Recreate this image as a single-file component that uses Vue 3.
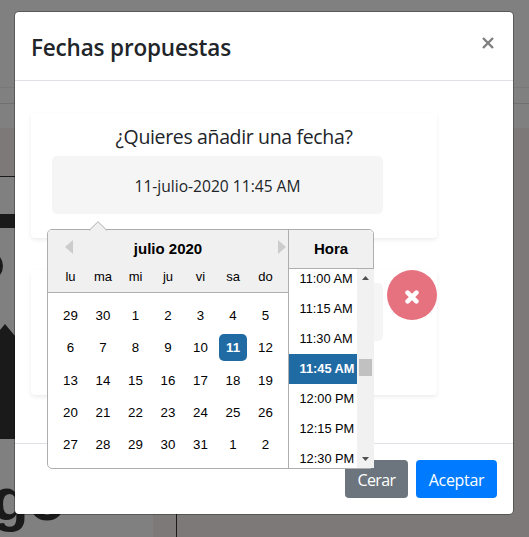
<script setup>
const dayNames = ['lu', 'ma', 'mi', 'ju', 'vi', 'sa', 'do']
const weeks = [
  [29, 30, 1, 2, 3, 4, 5],
  [6, 7, 8, 9, 10, 11, 12],
  [13, 14, 15, 16, 17, 18, 19],
  [20, 21, 22, 23, 24, 25, 26],
  [27, 28, 29, 30, 31, 1, 2],
]
const times = ['11:00 AM', '11:15 AM', '11:30 AM', '11:45 AM', '12:00 PM', '12:15 PM', '12:30 PM']
const selectedTime = '11:45 AM'
</script>

<template>
  <div class="page">
    <svg class="backdrop" width="529" height="537" viewBox="0 0 529 537">
      <rect width="529" height="537" fill="#7d7979" />
      <rect width="529" height="128" fill="#808080" />
      <rect y="87" width="529" height="1" fill="#787878" />
      <rect y="103" width="529" height="1" fill="#707070" />
      <rect y="176" width="177" height="361" fill="#1a1a1a" />
      <rect y="177" width="176" height="360" fill="#7d7979" />
      <rect y="177" width="153" height="360" fill="#808080" />
      <rect y="214" width="60" height="14" fill="#1a1a1a" />
      <circle cx="-12" cy="266" r="15" fill="#1a1a1a" />
      <path d="M0 330L5 324L20 342V439H0Z" fill="#1a1a1a" />
      <text class="brand" x="-8" y="520">go</text>
    </svg>

    <section class="modal">
      <header class="modal-header">
        <h5>Fechas propuestas</h5>
        <button class="close">
          <svg width="12" height="12" viewBox="0 0 12 12"><path d="M1 1L11 11M11 1L1 11" /></svg>
        </button>
      </header>

      <main class="modal-body">
        <div class="card">
          <p class="question">¿Quieres añadir una fecha?</p>
          <div class="field"><span>11-julio-2020 11:45 AM</span></div>
        </div>
        <div class="card saved">
          <div class="field"></div>
          <button class="remove">
            <svg width="14" height="14" viewBox="0 0 14 14"><path d="M2.6 2.7L11.4 11.3M11.4 2.7L2.6 11.3" /></svg>
          </button>
        </div>
      </main>

      <footer class="modal-footer">
        <button class="btn secondary"><span>Cerar</span></button>
        <button class="btn primary"><span>Aceptar</span></button>
      </footer>
    </section>

    <div class="picker">
      <svg class="pointer" width="18" height="10" viewBox="0 0 18 10">
        <path d="M0 9.5L9 .7L18 9.5V10H0Z" fill="#f0f0f0" />
        <path d="M0 9.5L9 .7L18 9.5" fill="none" stroke="#aeaeae" />
      </svg>
      <div class="calendar">
        <div class="calendar-head">
          <div class="month-row">
            <svg width="8" height="14" viewBox="0 0 8 14"><path d="M8 0V14L0 7Z" /></svg>
            <strong>julio 2020</strong>
            <svg width="8" height="14" viewBox="0 0 8 14"><path d="M0 0V14L8 7Z" /></svg>
          </div>
          <div class="names"><span v-for="name in dayNames" :key="name">{{ name }}</span></div>
        </div>
        <div class="weeks">
          <div v-for="(week, i) in weeks" :key="i" class="week">
            <span v-for="day in week" :key="day" :class="{ selected: day === 11 }">{{ day }}</span>
          </div>
        </div>
      </div>
      <div class="time">
        <div class="time-head">Hora</div>
        <div class="time-body">
          <ul>
            <li v-for="time in times" :key="time" :class="{ active: time === selectedTime }">{{ time }}</li>
          </ul>
          <div class="scrollbar">
            <svg width="7" height="4" viewBox="0 0 7 4"><path d="M0 4L3.5 0L7 4Z" /></svg>
            <i></i>
            <svg width="7" height="4" viewBox="0 0 7 4"><path d="M0 0L3.5 4L7 0Z" /></svg>
          </div>
        </div>
      </div>
    </div>
  </div>
</template>

<style>
body { margin: 0; overflow: hidden; }
</style>

<style scoped>
* { box-sizing: border-box; }
.page {
  position: relative;
  width: 529px;
  height: 537px;
  padding: 12px 16px 23px 15px;
  overflow: hidden;
  font-family: "Open Sans", "Noto Sans", sans-serif;
  color: #212529;
}
.backdrop { position: absolute; inset: 0; }
.brand { font: bold 60px "Liberation Sans", sans-serif; fill: #1a1a1a; }
button { border: 0; padding: 0; font-family: inherit; }
svg { display: block; flex: none; }
.modal {
  position: relative;
  display: flex;
  flex-direction: column;
  width: 498px;
  height: 502px;
  background: #fff;
  border-radius: 4px;
  box-shadow: 0 0 0 1px rgba(0, 0, 0, .3);
}
.modal-header {
  display: flex;
  justify-content: space-between;
  height: 69px;
  padding: 21px 19px 0 16px;
  border-bottom: 1px solid #dee2e6;
}
h5 { margin: 0; font-size: 22.5px; line-height: 30px; font-weight: 600; white-space: nowrap; letter-spacing: -.17px; }
.close { height: 12px; margin-top: 4px; background: none; }
.close path { fill: none; stroke: #7f7f7f; stroke-width: 2.4; }
.modal-body { flex: 1; padding: 32px 16px 0; }
.card {
  width: 406px;
  height: 125px;
  padding: 9px 21px 0;
  border-radius: 4px;
  box-shadow: 0 2px 4px rgba(0, 0, 0, .075);
}
.question { margin: 0 0 4px; font-size: 19.5px; line-height: 30px; text-align: center; white-space: nowrap; letter-spacing: -.35px; }
.field {
  display: flex;
  align-items: center;
  justify-content: center;
  width: 331px;
  height: 58px;
  padding-top: 2px;
  border-radius: 5px;
  background: #f5f5f5;
  font-size: 15.6px;
}
.card.saved { display: flex; gap: 4px; margin-top: 32px; padding: 0 0 0 21px; }
.saved .field { margin-top: 13px; }
.remove {
  display: flex;
  align-items: center;
  justify-content: center;
  width: 50px;
  height: 50px;
  padding-top: 3px;
  border-radius: 50%;
  background: #e7727f;
}
.remove path { fill: none; stroke: #fff; stroke-width: 4.6; stroke-linecap: round; }
.modal-footer {
  display: flex;
  justify-content: flex-end;
  gap: 8px;
  height: 71px;
  padding: 16px;
  border-top: 1px solid #dee2e6;
}
.btn { display: flex; align-items: center; justify-content: center; height: 38px; padding-top: 1px; border-radius: 4px; color: #fff; font-size: 16px; }
.secondary { width: 63px; background: #6c757d; letter-spacing: -.6px; }
.primary { width: 81px; background: #007bff; letter-spacing: -.3px; }
.picker {
  position: absolute;
  left: 47px;
  top: 229px;
  display: flex;
  width: 327px;
  height: 240px;
  border: 1px solid #aeaeae;
  border-radius: 5px;
  background: #fff;
  font: 13px "Liberation Sans", Arial, sans-serif;
  color: #000;
}
.pointer { position: absolute; left: 41px; top: -9px; }
.calendar { width: 241px; border-right: 1px solid #aeaeae; }
.calendar-head { height: 63px; border-bottom: 1px solid #aeaeae; border-radius: 4px 0 0; background: #f0f0f0; }
.month-row { display: flex; align-items: center; justify-content: space-between; height: 34px; padding: 0 2px 0 17px; fill: #ccc; }
.month-row strong { padding: 3px 15px 0 0; font-size: 15px; }
.names, .week { display: grid; grid-template-columns: repeat(7, 28px); column-gap: 4.5px; padding-left: 8.5px; text-align: center; }
.names { line-height: 25px; }
.weeks { padding-top: 9px; }
.week { height: 32.3px; line-height: 28px; font-size: 13.3px; }
.week span { height: 27px; border-radius: 5px; }
.week .selected { background: #216ba5; color: #fff; font-weight: bold; }
.time { display: flex; flex-direction: column; width: 84px; }
.time-head { height: 39px; border-bottom: 1px solid #aeaeae; border-radius: 0 4px 0 0; background: #f0f0f0; text-align: center; font-size: 15px; line-height: 38px; font-weight: bold; }
.time-body { display: flex; flex: 1; width: 85px; overflow: hidden; }
ul { width: 68px; height: 199px; margin: 0; padding: 0; list-style: none; overflow: hidden; }
li { height: 30px; padding-left: 10.5px; font-size: 12.8px; line-height: 30px; white-space: nowrap; }
li:first-child { margin-top: -5px; }
.active { background: #216ba5; color: #fff; font-weight: bold; }
.scrollbar { display: flex; flex-direction: column; align-items: center; width: 17px; height: 199px; padding: 7px 0 7px; background: #f1f1f1; fill: #505050; }
.scrollbar i { width: 13px; height: 17px; margin: 79px 0 auto; background: #c1c1c1; }
</style>
